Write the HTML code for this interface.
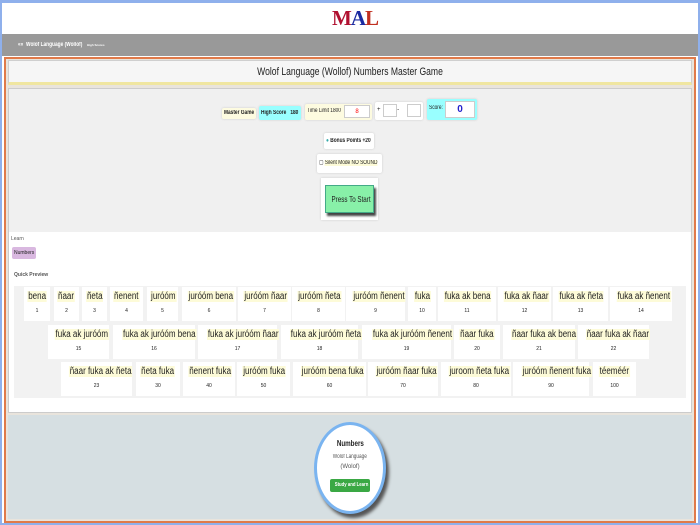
<!DOCTYPE html>
<html><head><meta charset="utf-8"><style>
*{box-sizing:border-box;margin:0;padding:0}
body{width:700px;height:525px;overflow:hidden;font-family:"Liberation Sans",sans-serif;background:#fff;position:relative;color:#222;white-space:nowrap}
.frame{position:absolute;inset:0;border:2px solid #8fb0ec;border-top-width:3px}
.hdr{position:absolute;left:2px;top:3px;width:696px;height:31px;background:#fff}
.logo{position:absolute;left:332px;top:6px;font-family:"Liberation Serif",serif;font-size:21px;font-weight:bold;letter-spacing:-1px}
.bar{position:absolute;left:2px;top:34px;width:696px;height:22px;background:#999;color:#fff;font-size:6px;font-weight:bold}
.orange{position:absolute;left:4px;top:57px;width:692px;height:466px;border:2px solid #e07a4a;background:#e9e4dc}
.title{position:absolute;left:8px;top:60px;width:684px;height:25px;background:#f6f6f6;border:1px solid #cfcfcf;border-bottom:3px solid #f0e6a0;font-size:11px;text-align:center;line-height:22px}
.sx{display:inline-block;transform:scaleX(.78);transform-origin:center}
.sxl{display:inline-block;transform:scaleX(.8);transform-origin:left}
.panel{position:absolute;left:8px;top:88px;width:684px;height:325px;background:#f0f0f0;border:1px solid #ccc}
.white{position:absolute;left:9px;top:232px;width:682px;height:180px;background:#fff}
.sm{position:absolute;font-size:6px;padding:2px;border-radius:2px;box-shadow:0 0 2px #ccc}
.qp{position:absolute;left:14px;top:286px;width:672px;height:112px;background:#f2f2f2}
.c{position:absolute;background:#fff;height:34px;text-align:center;font-size:10px}
.c b{font-weight:normal;background:#fdfbd8;display:inline-block;margin-top:4px;padding:0 1px;transform:scaleX(.8)}
.c i{font-style:normal;display:block;font-size:5px;margin-top:6px}
.bg{position:absolute;left:8px;top:415px;width:684px;height:104px;background:#d6dfe2}
.oval{position:absolute;left:314px;top:422px;width:72px;height:92px;border-radius:50%;background:#fff;border:3px solid #7ab4f0;box-shadow:3px 4px 3px #555;text-align:center}
</style></head><body>
<div class="frame"></div>
<div class="hdr"></div>
<div class="logo"><span style="color:#b01030">M</span><span style="color:#1a2aa0">A</span><span style="color:#c03020">L</span></div>
<div class="bar"><span class="sxl" style="position:absolute;left:16px;top:8px">«« &nbsp;Wolof Language (Wollof)</span><span style="position:absolute;left:85px;top:9px;font-size:3px">High Scores</span></div>
<div class="orange"></div>
<div class="title"><span class="sx">Wolof Language (Wollof) Numbers Master Game</span></div>
<div class="panel"></div>
<div class="sm" style="left:222px;top:108px;width:34px;height:11px;background:#fdfbe0;font-weight:bold"><span class="sxl">Master Game</span></div>
<div class="sm" style="left:259px;top:106px;width:42px;height:14px;background:#9ff;font-weight:bold;padding-top:4px"><span class="sxl">High Score &nbsp;&nbsp;180</span></div>
<div class="sm" style="left:305px;top:104px;width:67px;height:16px;background:#fdfbe0;padding-top:4px"><span class="sxl">Time Limit 1800</span></div>
<div style="position:absolute;left:344px;top:105px;width:26px;height:13px;background:#fff;border:1px solid #ccc;color:red;font-size:6px;text-align:center;line-height:12px">8</div>
<div class="sm" style="left:375px;top:102px;width:48px;height:18px;background:#fff;padding-top:5px">+ &nbsp; &nbsp; &nbsp; &nbsp; &nbsp;-</div>
<div style="position:absolute;left:383px;top:104px;width:14px;height:13px;border:1px solid #ccc"></div>
<div style="position:absolute;left:407px;top:104px;width:14px;height:13px;border:1px solid #ccc"></div>
<div class="sm" style="left:427px;top:99px;width:50px;height:21px;background:#9ff;padding-top:6px"><span class="sxl">Score:</span></div>
<div style="position:absolute;left:445px;top:101px;width:30px;height:17px;background:#fff;border:1px solid #ccc;color:#22c;font-weight:bold;font-size:10px;text-align:center;line-height:15px">0</div>
<div class="sm" style="left:324px;top:133px;width:50px;height:16px;background:#fff;padding-top:5px;font-weight:bold"><span class="sxl"><span style="color:#3aa">●</span> Bonus Points +20</span></div>
<div class="sm" style="left:317px;top:154px;width:65px;height:19px;background:#fff;padding-top:5px"><span class="sxl">▢ <span style="background:#fdfbd8">Silent Mode NO SOUND</span></span></div>
<div style="position:absolute;left:321px;top:178px;width:57px;height:42px;background:#fff;box-shadow:0 0 2px #ccc"></div>
<div style="position:absolute;left:325px;top:185px;width:49px;height:28px;background:#88f0a8;border:1px solid #4a8;box-shadow:2px 3px 2px #444;font-size:8px;text-align:center;line-height:27px"><span class="sx">Press To Start</span></div>
<div class="white"></div>
<div style="position:absolute;left:11px;top:236px;font-size:5px;color:#555">Learn</div>
<div style="position:absolute;left:12px;top:247px;font-size:5px;background:#d9b8e0;padding:3px 2px;border-radius:2px">Numbers</div>
<div style="position:absolute;left:14px;top:272px;font-size:5px;font-weight:bold;color:#555">Quick Preview</div>
<div class="qp"></div>
<div class="c" style="left:24px;top:287px;width:26px"><b>bena</b><i>1</i></div>
<div class="c" style="left:54px;top:287px;width:25px"><b>ñaar</b><i>2</i></div>
<div class="c" style="left:82px;top:287px;width:25px"><b>ñeta</b><i>3</i></div>
<div class="c" style="left:110px;top:287px;width:33px"><b>ñenent</b><i>4</i></div>
<div class="c" style="left:147px;top:287px;width:31px"><b>juróóm</b><i>5</i></div>
<div class="c" style="left:182px;top:287px;width:54px"><b>juróóm bena</b><i>6</i></div>
<div class="c" style="left:238px;top:287px;width:53px"><b>juróóm ñaar</b><i>7</i></div>
<div class="c" style="left:292px;top:287px;width:53px"><b>juróóm ñeta</b><i>8</i></div>
<div class="c" style="left:346px;top:287px;width:59px"><b>juróóm ñenent</b><i>9</i></div>
<div class="c" style="left:408px;top:287px;width:28px"><b>fuka</b><i>10</i></div>
<div class="c" style="left:438px;top:287px;width:58px"><b>fuka ak bena</b><i>11</i></div>
<div class="c" style="left:498px;top:287px;width:53px"><b>fuka ak ñaar</b><i>12</i></div>
<div class="c" style="left:553px;top:287px;width:55px"><b>fuka ak ñeta</b><i>13</i></div>
<div class="c" style="left:610px;top:287px;width:62px"><b>fuka ak ñenent</b><i>14</i></div>
<div class="c" style="left:48px;top:325px;width:61px"><b>fuka ak juróóm</b><i>15</i></div>
<div class="c" style="left:113px;top:325px;width:82px"><b>fuka ak juróóm bena</b><i>16</i></div>
<div class="c" style="left:198px;top:325px;width:79px"><b>fuka ak juróóm ñaar</b><i>17</i></div>
<div class="c" style="left:281px;top:325px;width:77px"><b>fuka ak juróóm ñeta</b><i>18</i></div>
<div class="c" style="left:362px;top:325px;width:89px"><b>fuka ak juróóm ñenent</b><i>19</i></div>
<div class="c" style="left:454px;top:325px;width:46px"><b>ñaar fuka</b><i>20</i></div>
<div class="c" style="left:503px;top:325px;width:72px"><b>ñaar fuka ak bena</b><i>21</i></div>
<div class="c" style="left:578px;top:325px;width:71px"><b>ñaar fuka ak ñaar</b><i>22</i></div>
<div class="c" style="left:61px;top:362px;width:71px"><b>ñaar fuka ak ñeta</b><i>23</i></div>
<div class="c" style="left:136px;top:362px;width:44px"><b>ñeta fuka</b><i>30</i></div>
<div class="c" style="left:183px;top:362px;width:52px"><b>ñenent fuka</b><i>40</i></div>
<div class="c" style="left:237px;top:362px;width:53px"><b>juróóm fuka</b><i>50</i></div>
<div class="c" style="left:293px;top:362px;width:73px"><b>juróóm bena fuka</b><i>60</i></div>
<div class="c" style="left:368px;top:362px;width:70px"><b>juróóm ñaar fuka</b><i>70</i></div>
<div class="c" style="left:441px;top:362px;width:70px"><b>juroom ñeta fuka</b><i>80</i></div>
<div class="c" style="left:513px;top:362px;width:76px"><b>juróóm ñenent fuka</b><i>90</i></div>
<div class="c" style="left:593px;top:362px;width:43px"><b>téeméér</b><i>100</i></div>
<div class="bg"></div>
<div class="oval">
<div style="font-size:8px;font-weight:bold;margin-top:14px"><span class="sx">Numbers</span></div>
<div style="font-size:6px;color:#555;margin-top:4px;line-height:10px"><span class="sx">Wolof Language</span><br>(Wolof)</div>
<div style="margin:7px auto 0;width:40px;height:13px;background:#3aa844;color:#fff;font-size:5.5px;font-weight:bold;line-height:13px;border-radius:2px"><span class="sx">Study and Learn</span></div>
</div>
</body></html>
